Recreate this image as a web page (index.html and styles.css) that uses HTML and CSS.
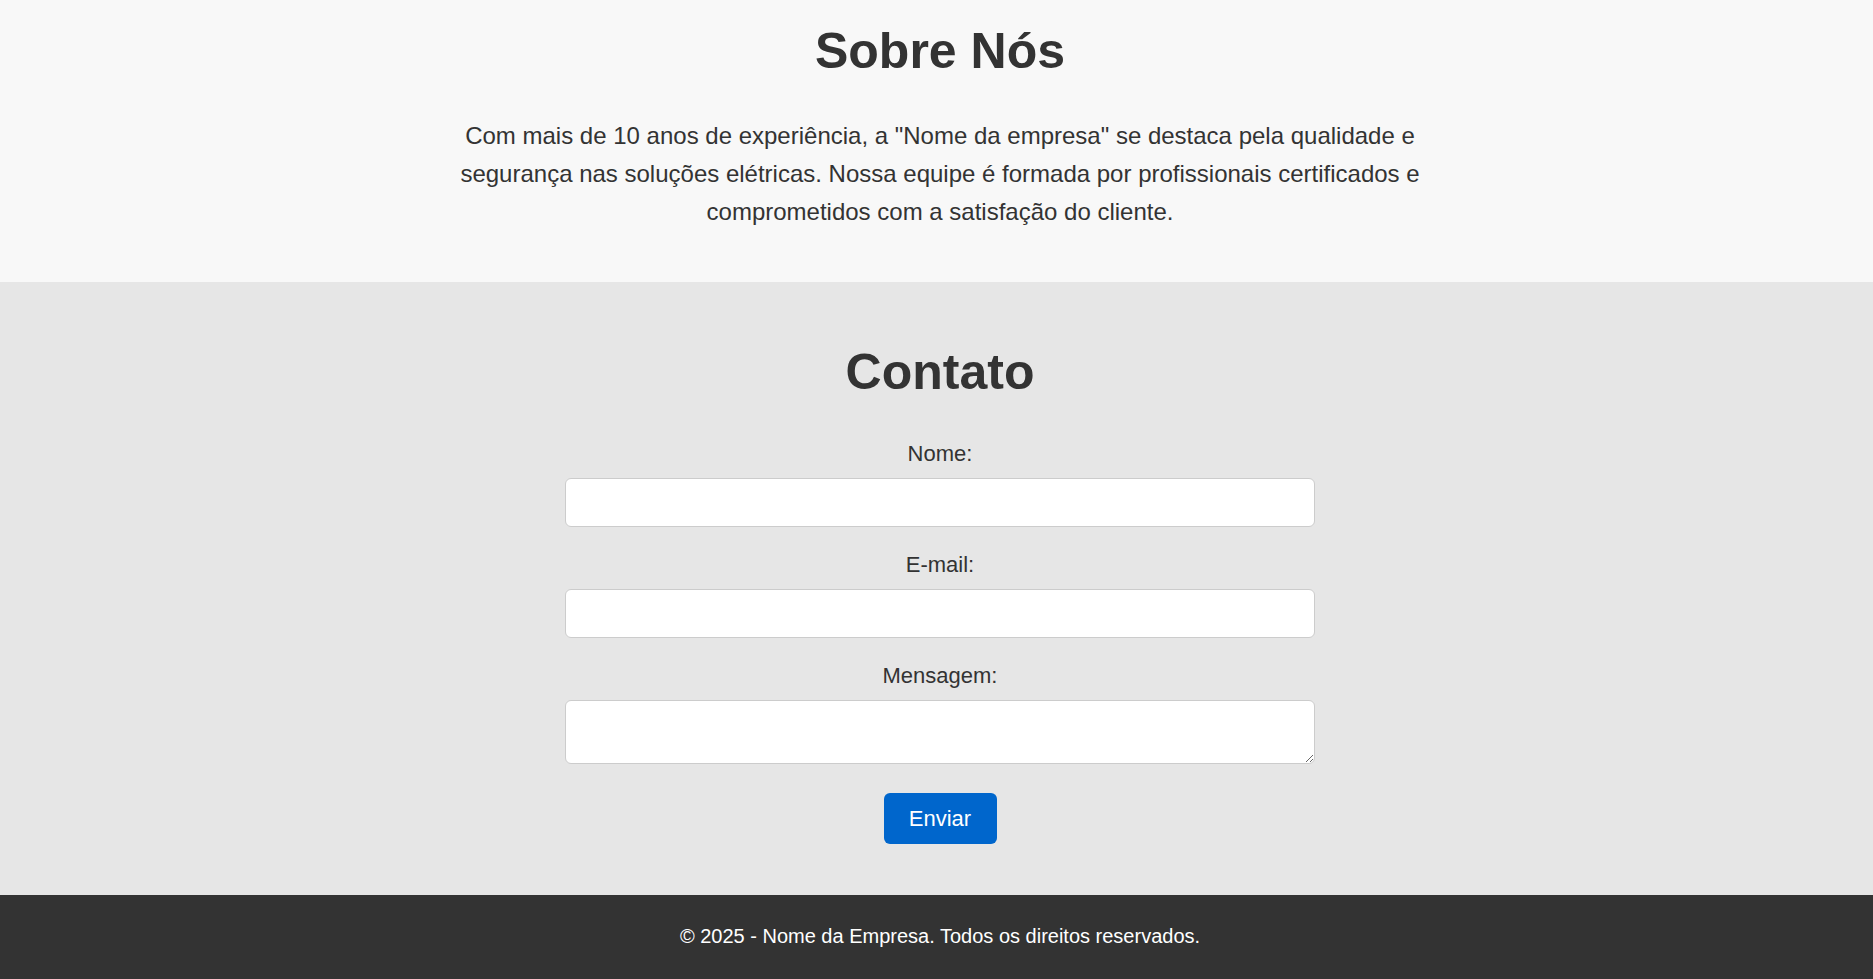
FILE: index.html
```html
<!DOCTYPE html>
<html lang="pt-BR">
<head>
<meta charset="utf-8">
<title>Nome da Empresa</title>
<link rel="stylesheet" href="styles.css">
</head>
<body>
<section class="about">
  <h2 class="title">Sobre Nós</h2>
  <p class="about-text">Com mais de 10 anos de experiência, a "Nome da empresa" se destaca pela qualidade e segurança nas soluções elétricas. Nossa equipe é formada por profissionais certificados e comprometidos com a satisfação do cliente.</p>
</section>
<section class="contact">
  <h2 class="title">Contato</h2>
  <form class="contact-form">
    <label class="field-label" for="nome">Nome:</label>
    <input class="field" type="text" id="nome">
    <label class="field-label" for="email">E-mail:</label>
    <input class="field" type="email" id="email">
    <label class="field-label" for="mensagem">Mensagem:</label>
    <textarea class="field field-area" id="mensagem"></textarea>
    <button class="submit" type="button">Enviar</button>
  </form>
</section>
<footer class="footer">
  <p class="footer-text">© 2025 - Nome da Empresa. Todos os direitos reservados.</p>
</footer>
</body>
</html>
```
FILE: styles.css
```css
html, body {
  margin: 0;
  padding: 0;
}
body {
  font-family: "Liberation Sans", Arial, sans-serif;
  color: #333333;
  background: #333333;
}
.about {
  background: #f8f8f8;
  padding: 23px 20px 50px 27px;
  text-align: center;
}
.title {
  margin: 0;
  font-size: 50px;
  font-weight: bold;
  line-height: 1.15;
  color: #333333;
}
.about .title {
  margin-bottom: 36px;
}
.about-text {
  max-width: 1000px;
  margin: 0 auto;
  font-size: 24px;
  line-height: 38.4px;
}
.contact {
  background: #e6e6e6;
  padding: 62px 20px 51px 27px;
  text-align: center;
}
.contact .title {
  margin-bottom: 40px;
}
.contact-form {
  width: 750px;
  margin: 0 auto;
  display: flex;
  flex-direction: column;
  align-items: center;
}
.field-label {
  display: block;
  font-size: 22px;
  line-height: normal;
  margin-bottom: 11px;
}
.field {
  box-sizing: border-box;
  width: 100%;
  height: 49px;
  margin: 0 0 25px;
  padding: 12px;
  border: 1px solid #cccccc;
  border-radius: 6px;
  background: #ffffff;
  font-family: inherit;
  font-size: 20px;
}
.field-area {
  height: 64px;
  margin-bottom: 29px;
  resize: vertical;
  display: block;
}
.submit {
  box-sizing: border-box;
  width: 113px;
  height: 51px;
  border: none;
  border-radius: 6px;
  background: #0066cc;
  color: #ffffff;
  font-family: inherit;
  font-size: 22px;
  cursor: pointer;
}
.footer {
  background: #333333;
  padding: 30px 20px 32px 27px;
  text-align: center;
}
.footer-text {
  margin: 0;
  color: #ffffff;
  font-size: 20px;
  line-height: 23px;
}
```
